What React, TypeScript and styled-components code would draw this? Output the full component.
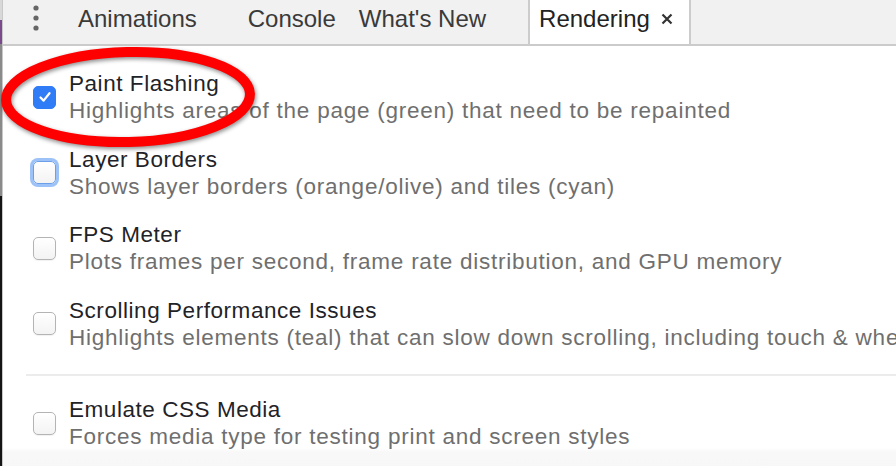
import styled, { createGlobalStyle } from 'styled-components'

const GlobalStyle = createGlobalStyle`
  html, body {
    margin: 0;
    padding: 0;
    background: #ffffff;
  }
  body {
    font-family: 'Liberation Sans', Arial, Helvetica, sans-serif;
  }
`

const Screen = styled.div`
  position: relative;
  display: flex;
  width: 896px;
  height: 466px;
  overflow: hidden;
`

const EdgeStrip = styled.div`
  width: 2px;
  flex: none;
  border-right: 1px solid #c8c8c8;
  background: linear-gradient(
    to bottom,
    #d8d8d8 0px,
    #d8d8d8 20px,
    #7b4a8c 20px,
    #7b4a8c 44px,
    #8a8a8a 44px,
    #8a8a8a 196px,
    #151515 196px,
    #151515 100%
  );
`

const Panel = styled.div`
  flex: 1;
  display: flex;
  flex-direction: column;
  min-width: 0;
`

const TabBar = styled.div`
  display: flex;
  align-items: stretch;
  height: 44px;
  background: #f1f1f1;
  border-bottom: 2px solid #cbcbcb;
  flex: none;
`

const MenuButton = styled.div`
  width: 65px;
  display: flex;
  align-items: flex-start;
  justify-content: center;
  padding-top: 5px;
  flex: none;
`

const Tab = styled.div<{ $active?: boolean; $gap?: number }>`
  display: flex;
  align-items: center;
  gap: 11px;
  padding: 0 ${(p) => (p.$active ? 16 : 10)}px 6px ${(p) => (p.$active ? 9 : 10)}px;
  margin-left: ${(p) => p.$gap ?? 0}px;
  font-size: 24px;
  color: ${(p) => (p.$active ? '#222222' : '#3a3a3a')};
  white-space: nowrap;
  background: ${(p) => (p.$active ? '#ffffff' : 'transparent')};
  border-left: ${(p) => (p.$active ? '2px solid #cccccc' : 'none')};
  border-right: ${(p) => (p.$active ? '2px solid #cccccc' : 'none')};
`

const Content = styled.div`
  flex: 1;
  display: flex;
  flex-direction: column;
  padding-top: 24px;
  background: linear-gradient(to bottom, #ffffff 0, #ffffff 402px, #f8f8f8 406px, #f7f7f7 100%);
`

const Row = styled.div`
  display: flex;
  align-items: center;
  gap: 13px;
  padding-left: 30px;
  margin-bottom: 21.5px;
`

const Box = styled.div<{ $checked?: boolean; $focused?: boolean }>`
  width: 23px;
  height: 23px;
  box-sizing: border-box;
  flex: none;
  border-radius: 5px;
  display: flex;
  align-items: center;
  justify-content: center;
  border: 1px solid
    ${(p) => (p.$checked ? '#2f7cf6' : p.$focused ? '#6b9fe8' : '#b4b4b4')};
  background: ${(p) =>
    p.$checked ? '#2f7cf6' : 'linear-gradient(to bottom, #ffffff, #f3f3f3)'};
  box-shadow: ${(p) =>
    p.$focused
      ? '0 0 0 3px #9cc2f7'
      : p.$checked
        ? 'none'
        : '0 1px 1px rgba(0,0,0,0.06)'};
`

const Texts = styled.div`
  display: flex;
  flex-direction: column;
  white-space: nowrap;
  font-size: 22.5px;
  line-height: 27px;
`

const Title = styled.div`
  color: #1f2328;
  letter-spacing: 0.55px;
`

const Desc = styled.div`
  color: #6f6f6f;
  letter-spacing: 0.75px;
`

const Divider = styled.div`
  height: 2px;
  background: #ececec;
  margin: 2px 0 20px 23px;
  flex: none;
`

const Highlight = styled.svg`
  position: absolute;
  left: 0;
  top: 44px;
  width: 262px;
  height: 110px;
  filter: drop-shadow(1px 2px 2px rgba(0, 0, 0, 0.45));
  pointer-events: none;
`

const Dots = () => (
  <svg width="8" height="28" viewBox="0 0 8 28">
    <circle cx="4" cy="3" r="2.6" fill="#666" />
    <circle cx="4" cy="13" r="2.6" fill="#666" />
    <circle cx="4" cy="23" r="2.6" fill="#666" />
  </svg>
)

const CloseIcon = () => (
  <svg width="12" height="12" viewBox="0 0 12 12">
    <path d="M1.5 1.5 L10.5 10.5 M10.5 1.5 L1.5 10.5" stroke="#333" strokeWidth="2.2" />
  </svg>
)

const Check = () => (
  <svg width="14" height="14" viewBox="0 0 14 14">
    <path
      d="M2.5 7.5 L5.6 10.6 L11.5 3.2"
      fill="none"
      stroke="#ffffff"
      strokeWidth="2.2"
      strokeLinecap="round"
      strokeLinejoin="round"
    />
  </svg>
)

type Option = {
  title: string
  desc: string
  checked?: boolean
  focused?: boolean
}

const options: Option[] = [
  {
    title: 'Paint Flashing',
    desc: 'Highlights areas of the page (green) that need to be repainted',
    checked: true,
  },
  {
    title: 'Layer Borders',
    desc: 'Shows layer borders (orange/olive) and tiles (cyan)',
    focused: true,
  },
  {
    title: 'FPS Meter',
    desc: 'Plots frames per second, frame rate distribution, and GPU memory',
  },
  {
    title: 'Scrolling Performance Issues',
    desc: 'Highlights elements (teal) that can slow down scrolling, including touch & whe',
  },
]

const OptionRow = ({ title, desc, checked, focused }: Option) => (
  <Row>
    <Box $checked={checked} $focused={focused}>
      {checked ? <Check /> : null}
    </Box>
    <Texts>
      <Title>{title}</Title>
      <Desc>{desc}</Desc>
    </Texts>
  </Row>
)

export default function App() {
  return (
    <Screen>
      <GlobalStyle />
      <EdgeStrip />
      <Panel>
        <TabBar>
          <MenuButton>
            <Dots />
          </MenuButton>
          <Tab>Animations</Tab>
          <Tab $gap={31}>Console</Tab>
          <Tab $gap={3}>What's New</Tab>
          <Tab $active $gap={32}>
            Rendering
            <CloseIcon />
          </Tab>
        </TabBar>

        <Content>
          {options.map((o) => (
            <OptionRow key={o.title} {...o} />
          ))}
          <Divider />
          <OptionRow
            title="Emulate CSS Media"
            desc="Forces media type for testing print and screen styles"
          />
        </Content>
      </Panel>

      <Highlight viewBox="0 0 262 110">
        <ellipse
          cx="128"
          cy="53"
          rx="122"
          ry="45"
          fill="none"
          stroke="#ff0000"
          strokeWidth="10"
          transform="rotate(-1.5 128 53)"
        />
      </Highlight>
    </Screen>
  )
}
